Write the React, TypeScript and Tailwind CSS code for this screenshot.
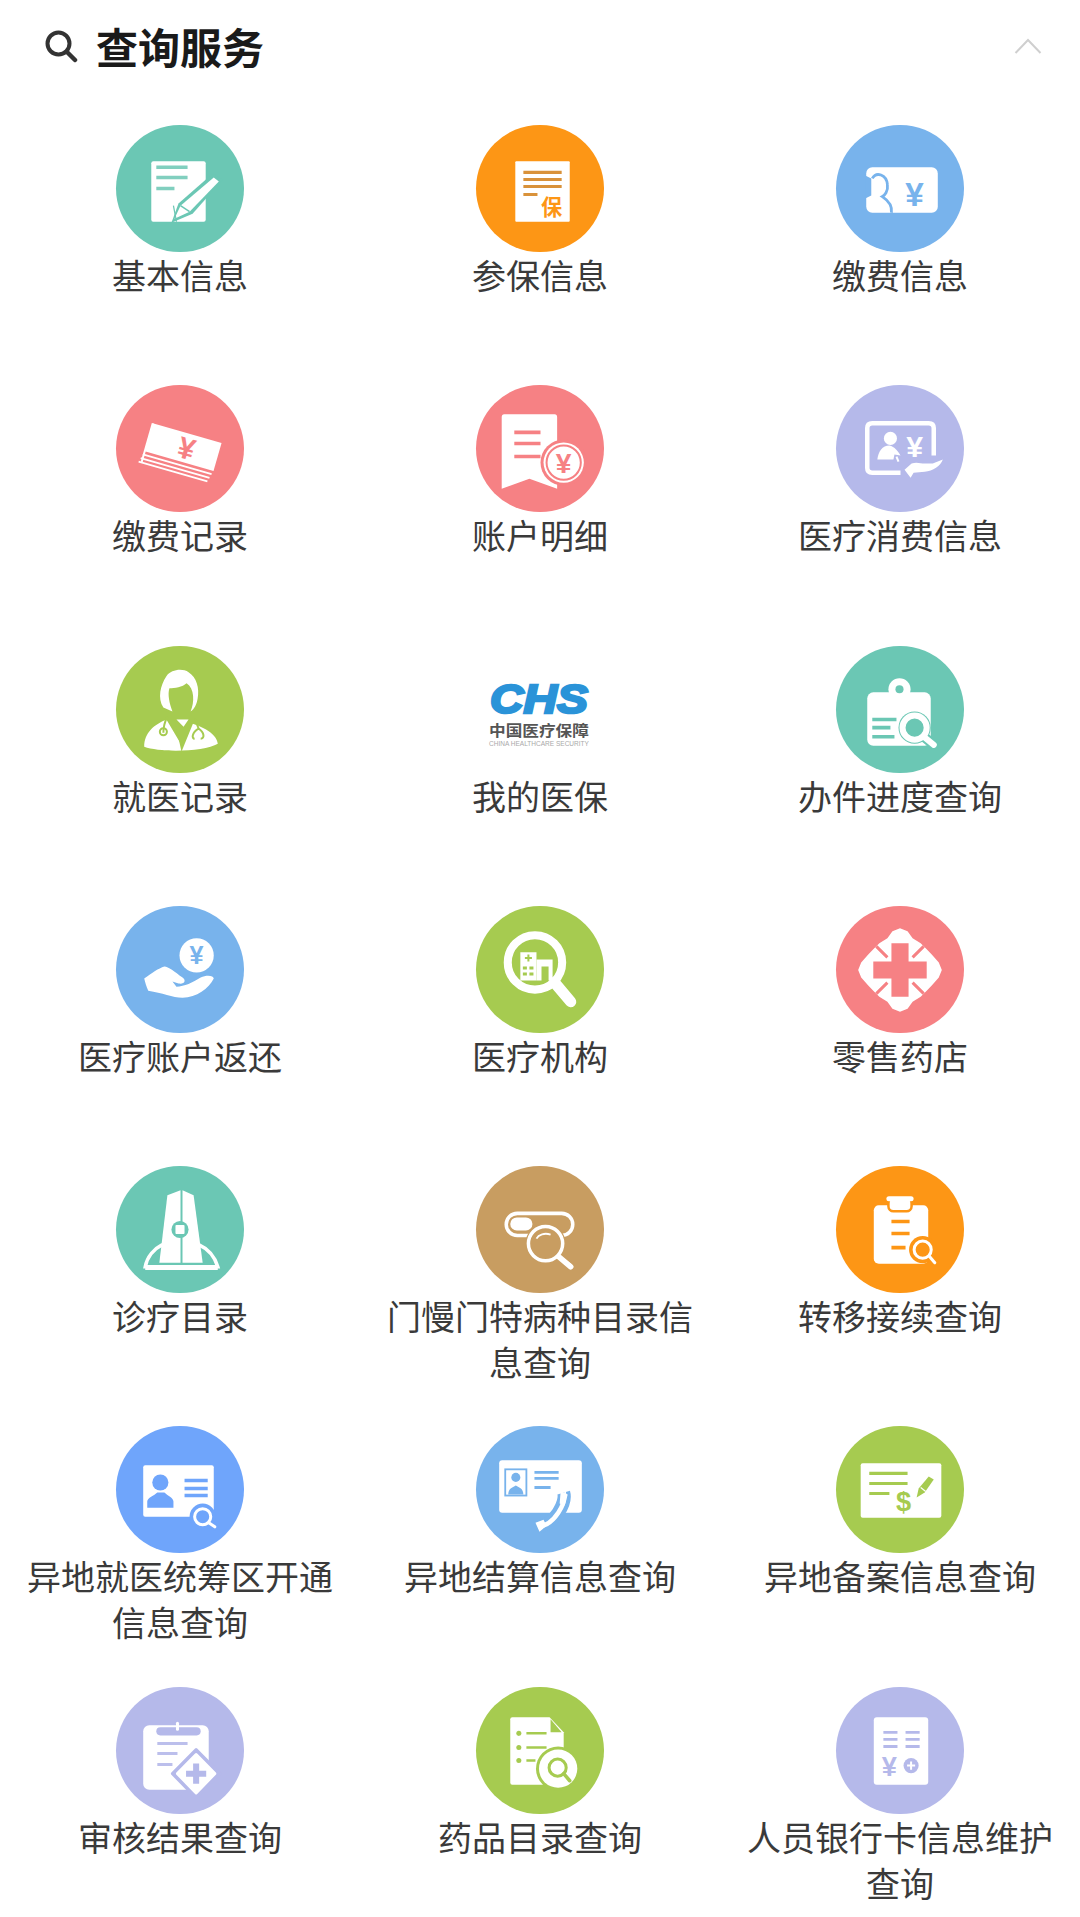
import React from "react";

const FONT = "[font-family:'Noto_Sans_CJK_SC','Noto_Sans',sans-serif]";
const LATIN = "Liberation Sans, sans-serif";

type IconProps = { c: string };

function Svg({ children }: { children: React.ReactNode }) {
  return (
    <svg viewBox="0 0 127 127" className="w-[128px] h-[128px]">
      {children}
    </svg>
  );
}

function Yen({ x, y, size, c, rotate }: { x: number; y: number; size: number; c: string; rotate?: number }) {
  return (
    <text
      x={x}
      y={y}
      fontSize={size}
      fontFamily={LATIN}
      fontWeight="700"
      fill={c}
      textAnchor="middle"
      transform={rotate ? `rotate(${rotate} ${x} ${y})` : undefined}
    >
      ¥
    </text>
  );
}

function Lens({ x, y, r, hx, hy, c, w = 3.5, halo = 5 }: { x: number; y: number; r: number; hx: number; hy: number; c: string; w?: number; halo?: number }) {
  return (
    <g strokeLinecap="round">
      <circle cx={x} cy={y} r={r + halo} fill={c} />
      <line x1={x + r * 0.7} y1={y + r * 0.7} x2={hx} y2={hy} stroke={c} strokeWidth={w + 4} />
      <circle cx={x} cy={y} r={r} fill={c} stroke="#fff" strokeWidth={w} />
      <line x1={x + r * 0.75} y1={y + r * 0.75} x2={hx} y2={hy} stroke="#fff" strokeWidth={w} />
    </g>
  );
}

function BasicInfo({ c }: IconProps) {
  return (
    <Svg>
      <rect x="35" y="36" width="54" height="60" rx="2" fill="#fff" />
      <path d="M40 42h31M40 52h31M40 63h18" stroke={c} strokeWidth="3.5" opacity="0.85" />
      <path d="M55 97 L62 78 L96 48 L106 54 L76 88 Z" fill={c} />
      <path d="M58 93 L64 80 L97 52 L102 56 L73 86 Z" fill="#fff" />
      <path d="M64 80 L73 86" stroke={c} strokeWidth="1.5" />
      <path d="M60 96 L57 80" stroke={c} strokeWidth="1.2" />
    </Svg>
  );
}

function Insured({ c }: IconProps) {
  return (
    <Svg>
      <rect x="39" y="36" width="54" height="60" rx="1" fill="#fff" />
      <path d="M47 47h38M47 54h38M47 61h38M47 69h14" stroke="#d9923a" strokeWidth="3" />
      <text x="75" y="89" fontSize="21" fontWeight="700" fill={c} textAnchor="middle" fontFamily="Noto Sans CJK SC, sans-serif">保</text>
    </Svg>
  );
}

function PayInfo({ c }: IconProps) {
  return (
    <Svg>
      <rect x="30" y="42" width="71" height="45" rx="6" fill="#fff" />
      <path d="M29 50 L35 53 L35 70 L29 73 Z" fill={c} />
      <path d="M36 53 C40 46 50 49 51 59 C52 66 48 70 46 71 C52 75 56 80 55 87" fill="none" stroke={c} strokeWidth="2.8" />
      <Yen x={78} y={80} size={33} c={c} />
    </Svg>
  );
}

function PayRecord({ c }: IconProps) {
  return (
    <Svg>
      <g transform="rotate(16 66 62)">
        <rect x="31" y="47" width="71" height="29" fill="#fff" />
        <path d="M30 79.5h71M29 83.5h71M28 87.5h71" stroke="#fff" strokeWidth="1.8" />
        <path d="M31 47v40" stroke="#fff" strokeWidth="2" />
      </g>
      <Yen x={67} y={73} size={30} c={c} rotate={16} />
    </Svg>
  );
}

function Statement({ c }: IconProps) {
  return (
    <Svg>
      <path d="M28 29 H78 Q80.500 29 80.500 32 V103 L53 93 L25.500 103 V32 Q25.500 29 28 29 Z" fill="#fff" />
      <path d="M38 47h26M38 58h26M38 71h26" stroke={c} strokeWidth="3.5" />
      <circle cx="87" cy="77" r="23" fill={c} />
      <circle cx="87" cy="77" r="20" fill="#fff" />
      <circle cx="87" cy="77" r="17" fill="none" stroke={c} strokeWidth="2" />
      <Yen x={87} y={87} size={28} c={c} />
    </Svg>
  );
}

function MedicalSpend({ c }: IconProps) {
  return (
    <Svg>
      <path d="M64 87 H36 Q31 87 31 82 V43 Q31 38 36 38 H92 Q97 38 97 43 V70" fill="none" stroke="#fff" strokeWidth="4.500" />
      <circle cx="54" cy="53" r="6.500" fill="#fff" />
      <path d="M41 74 C42 66 46 60 53 60 C58 61 62 66 64 70 L58 69 L57 74 Z" fill="#fff" />
      <path d="M60 71 L62 76" stroke="#fff" strokeWidth="2" />
      <Yen x={78} y={71} size={30} c="#fff" />
      <path d="M68 84 L75 78 C80 76 84 78 88 78 L96 78 L106 74 C104 80 96 86 88 86 L77 87 L74 92 Z" fill="#fff" />
    </Svg>
  );
}

function Doctor({ c }: IconProps) {
  return (
    <Svg>
      <path d="M47 61 C41 52 44 39 50 30 C55 23 66 22 72 26 C80 31 83 42 81 52 C80 58 78 62 74 65 C78 56 78 42 70 37 C66 41 58 42 53 42 C51 48 53 57 56 65 Z" fill="#fff" />
      <path d="M28 100 C28 86 38 78 50 73 L66 100 L68 75 C82 78 100 86 101 97 C88 105 44 106 28 100 Z" fill="#fff" />
      <path d="M58 73 H78 L65 105 Z" fill={c} />
      <path d="M60 73 H72 L67 80 Z" fill="#fff" />
      <path d="M51 70 C48 76 47 82 47 86" fill="none" stroke={c} strokeWidth="2" />
      <circle cx="47" cy="85" r="3.500" fill="none" stroke={c} strokeWidth="2" />
      <path d="M79 72 C80 78 81 80 82 82 C75 86 75 92 78 92 M82 82 C88 86 88 92 84 92" fill="none" stroke={c} strokeWidth="2" />
    </Svg>
  );
}

function Logo() {
  return (
    <Svg>
      <text x="14" y="66" fontFamily={LATIN} fontSize="41" fontWeight="700" fontStyle="italic" fill="#2a93d8" stroke="#2a93d8" strokeWidth="2.500" textLength="97" lengthAdjust="spacingAndGlyphs">CHS</text>
      <text x="13" y="89" fontFamily="Liberation Sans, Noto Sans CJK SC, sans-serif" fontSize="15" fontWeight="700" fill="#555" textLength="99" lengthAdjust="spacingAndGlyphs">中国医疗保障</text>
      <text x="13" y="99" fontFamily={LATIN} fontSize="6.500" fill="#a9a9a9" textLength="99" lengthAdjust="spacingAndGlyphs">CHINA HEALTHCARE SECURITY</text>
    </Svg>
  );
}

function Progress({ c }: IconProps) {
  return (
    <Svg>
      <rect x="31" y="46" width="63" height="53" rx="6" fill="#fff" />
      <circle cx="63" cy="43" r="11" fill="#fff" />
      <circle cx="63" cy="43" r="4" fill={c} />
      <path d="M36 73h24M36 81h18M36 90h22" stroke={c} strokeWidth="3.500" />
      <Lens x={78} y={81} r={12} hx={97} hy={98} c={c} w={6} halo={4} />
    </Svg>
  );
}

function Refund({ c }: IconProps) {
  return (
    <Svg>
      <circle cx="80" cy="49" r="17" fill="#fff" />
      <Yen x={80} y={58} size={25} c={c} />
      <path d="M28 72 C36 66 42 62 48 60 C52 60 58 65 66 71 C70 74 68 78 62 77 L56 75 L60 80 C68 80 76 76 84 71 C90 68 97 69 97 72 C92 82 80 91 66 91 C56 91 46 86 32 84 C30 80 29 76 28 72 Z" fill="#fff" />
    </Svg>
  );
}

function Institution({ c }: IconProps) {
  return (
    <Svg>
      <circle cx="58.500" cy="56" r="27" fill="none" stroke="#fff" strokeWidth="8" />
      <path d="M78 76 L94 95" stroke="#fff" strokeWidth="11" strokeLinecap="round" />
      <path d="M44 74 V46 H60 V74 Z" fill="#fff" />
      <path d="M52 48v7M48.500 51.500h7" stroke={c} strokeWidth="2" />
      <path d="M46.500 60h4v3h-4zM53 60h4v3h-4zM46.500 66h4v3h-4zM53 66h4v3h-4z" fill={c} />
      <path d="M60 53 H76 V74 H72 V60 H65 V74 H60 Z" fill="#fff" />
    </Svg>
  );
}

function Pharmacy({ c }: IconProps) {
  return (
    <Svg>
      <path
        d="M56 25 L63.500 22 L71 25 L76 32 L84 37 L90 43 L95 48 L102 56 L105 63.500 L102 71 L95 79 L90 84 L84 90 L76 95 L71 102 L63.500 105 L56 102 L51 95 L43 90 L37 84 L32 79 L25 71 L22 63.500 L25 56 L32 48 L37 43 L43 37 L51 32 Z"
        fill="#fff"
      />
      <path d="M55 37 H72 V55 H90 V72 H72 V90 H55 V72 H37 V55 H55 Z" fill={c} />
      <path d="M40 40 L51 51 M87 40 L76 51 M40 87 L51 76 M87 87 L76 76" stroke={c} strokeWidth="3" />
    </Svg>
  );
}

function Catalog({ c }: IconProps) {
  return (
    <Svg>
      <path d="M46 78 C38 82 31 90 29 100 H101 C98 90 91 82 82 78" fill="none" stroke="#fff" strokeWidth="3.500" />
      <path d="M29 101.500 H101" stroke="#fff" strokeWidth="3.500" />
      <path d="M51 29 L64 24 V96 H43 Z" fill="#fff" />
      <path d="M66 24 L77 29 L86 96 H66 Z" fill="#fff" />
      <circle cx="63.500" cy="63" r="8.500" fill={c} />
      <rect x="59" y="58.500" width="9" height="9" rx="1" fill="#fff" />
    </Svg>
  );
}

function Outpatient({ c }: IconProps) {
  return (
    <Svg>
      <rect x="30" y="47" width="66" height="22" rx="11" fill="none" stroke="#fff" strokeWidth="3.500" />
      <rect x="34" y="51" width="22" height="13" rx="6.500" fill="#fff" />
      <Lens x={69} y={77} r={17} hx={94} hy={99} c={c} w={3.500} halo={3} />
      <path d="M60 72 C62 68 68 66 74 68" fill="none" stroke="#fff" strokeWidth="1.800" />
      <path d="M82 90 L94 100" stroke="#fff" strokeWidth="5.500" strokeLinecap="round" />
    </Svg>
  );
}

function Transfer({ c }: IconProps) {
  return (
    <Svg>
      <rect x="37.500" y="39" width="54" height="58" rx="5" fill="#fff" />
      <rect x="52" y="32" width="23" height="13" rx="5" fill="#fff" stroke={c} strokeWidth="2.500" />
      <rect x="50" y="30" width="27" height="5" rx="2.500" fill="#fff" />
      <path d="M55 55h18M55 67h18M55 81h14" stroke={c} strokeWidth="3.500" />
      <Lens x={86} y={83} r={8.500} hx={98} hy={96} c={c} w={3} halo={5} />
    </Svg>
  );
}

function CrossRegion({ c }: IconProps) {
  return (
    <Svg>
      <rect x="27" y="39" width="70" height="51" rx="2" fill="#fff" />
      <circle cx="44" cy="56" r="8" fill={c} />
      <path d="M31 81 V75 C31 71 38 69 41 66 H48 C51 69 57 71 57 75 V81 Z" fill={c} />
      <path d="M68 54h23M68 62h23M68 69h23" stroke={c} strokeWidth="3.500" />
      <Lens x={86} y={90} r={8} hx={98} hy={100} c={c} w={3} halo={5} />
    </Svg>
  );
}

function Settlement({ c }: IconProps) {
  return (
    <Svg>
      <rect x="23" y="34" width="82" height="52" rx="3" fill="#fff" />
      <rect x="29" y="43" width="21" height="26" fill="#fff" stroke={c} strokeWidth="1.800" />
      <circle cx="39.500" cy="51" r="4.500" fill={c} />
      <path d="M32 68 C32 62 36 61 39.500 59 C43 61 47 62 47 68 Z" fill={c} />
      <path d="M58 46h24M58 52h24M58 61h16" stroke={c} strokeWidth="2.800" />
      <path d="M87 66 C90 76 78 98 62 100" fill="none" stroke={c} strokeWidth="13" />
      <path d="M87 66 C90 76 78 98 62 100" fill="none" stroke="#fff" strokeWidth="4.500" />
      <path d="M84 65 L91 68 L88 79 L83 77 Z M59 96 L67 93 L70 99 L63 105 Z" fill="#fff" />
    </Svg>
  );
}

function Filing({ c }: IconProps) {
  return (
    <Svg>
      <rect x="24.500" y="37" width="80" height="54" rx="2" fill="#fff" />
      <path d="M33 47h38M33 57h38M33 67h20" stroke={c} strokeWidth="3" />
      <text x="67" y="84" fontFamily={LATIN} fontSize="27" fontWeight="700" fill={c} textAnchor="middle">$</text>
      <path d="M80 71 L82 62 L92 50 L97 53 L88 66 Z" fill={c} />
      <path d="M84 61 L89 65" stroke="#fff" strokeWidth="1.200" />
    </Svg>
  );
}

function Audit({ c }: IconProps) {
  return (
    <Svg>
      <rect x="27" y="38" width="65" height="64" rx="6" fill="#fff" />
      <rect x="40" y="40" width="44" height="8" rx="4" fill={c} />
      <path d="M61 36 V42" stroke="#fff" strokeWidth="3" strokeLinecap="round" />
      <path d="M41 56h30M41 66h20M41 77h15" stroke={c} strokeWidth="3" opacity="0.9" />
      <path d="M79.500 62 L103 86 L79.500 110 L56 86 Z" fill={c} strokeLinejoin="round" stroke={c} strokeWidth="3" />
      <path d="M79.500 67 L98 86 L79.500 105 L61 86 Z" fill="#fff" stroke="#fff" strokeWidth="3" strokeLinejoin="round" />
      <path d="M79.500 76v20M69.500 86h20" stroke={c} strokeWidth="6" />
    </Svg>
  );
}

function DrugList({ c }: IconProps) {
  return (
    <Svg>
      <path d="M36 30 H73 L87 45 V97 H36 Q34 97 34 95 V32 Q34 30 36 30 Z" fill="#fff" />
      <path d="M74 32 L85 45 H74 Z" fill={c} />
      <circle cx="42.500" cy="46" r="2.500" fill={c} />
      <circle cx="42.500" cy="60" r="2.500" fill={c} />
      <circle cx="42.500" cy="73" r="2.500" fill={c} />
      <path d="M50 46h20M50 60h20M50 73h9" stroke={c} strokeWidth="2.500" />
      <circle cx="81.500" cy="81" r="22" fill={c} />
      <circle cx="81.500" cy="81" r="19" fill="#fff" />
      <circle cx="81" cy="80" r="8.500" fill="none" stroke={c} strokeWidth="3" />
      <path d="M87 86 L93 93" stroke={c} strokeWidth="3.500" strokeLinecap="round" />
    </Svg>
  );
}

function BankCard({ c }: IconProps) {
  return (
    <Svg>
      <rect x="37.500" y="30" width="54" height="67" rx="3" fill="#fff" />
      <path d="M47 45h14M47 52h14M47 59h14M69 45h14M69 52h14M69 59h14" stroke={c} strokeWidth="2.800" />
      <Yen x={53} y={88} size={27} c={c} />
      <circle cx="74.500" cy="78" r="7.500" fill={c} />
      <path d="M74.500 74v8M70.500 78h8" stroke="#fff" strokeWidth="2" />
    </Svg>
  );
}

const items = [
  { label: "基本信息", bg: "bg-[#6bc7b4]", color: "#6bc7b4", Icon: BasicInfo },
  { label: "参保信息", bg: "bg-[#fd9615]", color: "#fd9615", Icon: Insured },
  { label: "缴费信息", bg: "bg-[#78b3ec]", color: "#78b3ec", Icon: PayInfo },
  { label: "缴费记录", bg: "bg-[#f68184]", color: "#f68184", Icon: PayRecord },
  { label: "账户明细", bg: "bg-[#f68184]", color: "#f68184", Icon: Statement },
  { label: "医疗消费信息", bg: "bg-[#b5b9ea]", color: "#b5b9ea", Icon: MedicalSpend },
  { label: "就医记录", bg: "bg-[#a6cb50]", color: "#a6cb50", Icon: Doctor },
  { label: "我的医保", bg: "bg-white", color: "#fff", Icon: Logo },
  { label: "办件进度查询", bg: "bg-[#6bc7b4]", color: "#6bc7b4", Icon: Progress },
  { label: "医疗账户返还", bg: "bg-[#78b3ec]", color: "#78b3ec", Icon: Refund },
  { label: "医疗机构", bg: "bg-[#a6cb50]", color: "#a6cb50", Icon: Institution },
  { label: "零售药店", bg: "bg-[#f68184]", color: "#f68184", Icon: Pharmacy },
  { label: "诊疗目录", bg: "bg-[#6bc7b4]", color: "#6bc7b4", Icon: Catalog },
  { label: "门慢门特病种目录信息查询", bg: "bg-[#c89d61]", color: "#c89d61", Icon: Outpatient },
  { label: "转移接续查询", bg: "bg-[#fd9615]", color: "#fd9615", Icon: Transfer },
  { label: "异地就医统筹区开通信息查询", bg: "bg-[#6fa5fb]", color: "#6fa5fb", Icon: CrossRegion },
  { label: "异地结算信息查询", bg: "bg-[#78b3ec]", color: "#78b3ec", Icon: Settlement },
  { label: "异地备案信息查询", bg: "bg-[#a6cb50]", color: "#a6cb50", Icon: Filing },
  { label: "审核结果查询", bg: "bg-[#b5b9ea]", color: "#b5b9ea", Icon: Audit },
  { label: "药品目录查询", bg: "bg-[#a6cb50]", color: "#a6cb50", Icon: DrugList },
  { label: "人员银行卡信息维护查询", bg: "bg-[#b5b9ea]", color: "#b5b9ea", Icon: BankCard },
];

export default function App() {
  return (
    <div className={`w-[1080px] h-[1917px] bg-white overflow-hidden ${FONT}`}>
      <div className="h-[125px]">
        <div className="flex items-center h-[92px] pl-[44px] pr-[38px]">
          <svg viewBox="0 0 34 34" className="w-[34px] h-[34px] text-[#333]" fill="none" stroke="currentColor">
            <circle cx="14.500" cy="14.500" r="11" strokeWidth="4" />
            <path d="M23 23 L31 31" strokeWidth="4.500" strokeLinecap="round" />
          </svg>
          <h1 className="ml-[18px] text-[42px] font-bold leading-none text-[#1a1a1a]">查询服务</h1>
          <svg viewBox="0 0 28 16" className="ml-auto w-[28px] h-[16px] text-[#cfcfcf]" fill="none" stroke="currentColor">
            <path d="M1.500 15 L14 2 L26.500 15" strokeWidth="2" />
          </svg>
        </div>
      </div>
      <div className="grid grid-cols-3 auto-rows-[260.3px]">
        {items.map(({ label, bg, color, Icon }) => (
          <div key={label} className="flex flex-col items-center">
            <div className={`w-[128px] h-[127px] shrink-0 rounded-full overflow-hidden ${bg}`}>
              <Icon c={color} />
            </div>
            <p className="w-[320px] text-center text-[34px] leading-[46px] text-[#3a3a3a]">{label}</p>
          </div>
        ))}
      </div>
    </div>
  );
}
